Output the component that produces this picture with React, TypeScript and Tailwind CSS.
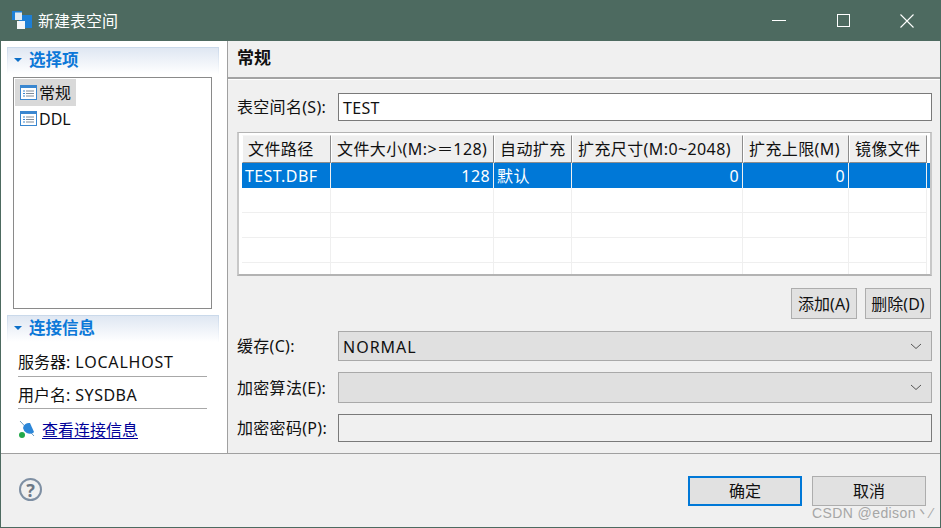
const font = "font-['Noto_Sans','Noto_Sans_CJK_SC',sans-serif]";

const columns = [
  { title: "文件路径", width: "w-[89px]", value: "TEST.DBF", right: false },
  { title: "文件大小(M:>＝128)", width: "w-[163px]", value: "128", right: true },
  { title: "自动扩充", width: "w-[78px]", value: "默认", right: false },
  { title: "扩充尺寸(M:0~2048)", width: "w-[171px]", value: "0", right: true },
  { title: "扩充上限(M)", width: "w-[106px]", value: "0", right: true },
  { title: "镜像文件", width: "w-[78px]", value: "", right: false },
];

const ListIcon = () => (
  <svg width="18" height="16" viewBox="0 0 18 16" className="shrink-0">
    <rect x="0.5" y="0.5" width="16" height="14" fill="#fff" stroke="#3a87d0" />
    <rect x="0" y="0" width="17" height="3" fill="#3a87d0" />
    <path d="M3 6h2M3 8.5h2M3 11h2" stroke="#3a87d0" strokeWidth="1.2" />
    <path d="M6 6h8M6 8.5h8M6 11h8" stroke="#7f8c99" strokeWidth="1.2" />
  </svg>
);

const Chevron = () => (
  <svg width="12" height="7" viewBox="0 0 12 7" className="shrink-0">
    <path d="M1 1l5 4.5L11 1" fill="none" stroke="#555" strokeWidth="1" />
  </svg>
);

const SectionHeader = ({ title }: { title: string }) => (
  <div className="flex h-[27px] items-center gap-[7px] rounded-t-[4px] border-x border-t border-[#c9d8ea] bg-gradient-to-b from-[#dfe7f2] to-white pb-[2px] pl-[6px] [border-image:linear-gradient(#c9d8ea,#fff)_1]">
    <div className="h-0 w-0 border-x-[4px] border-t-[4px] border-x-transparent border-t-[#0c6fc8]" />
    <span className="text-[16.5px] font-semibold text-[#0c78d8]">{title}</span>
  </div>
);

const Combo = ({ value, height }: { value: string; height: string }) => (
  <div className={`flex flex-1 items-center justify-between border border-[#a9a9a9] bg-[#e0e0e0] pl-1 pr-[9px] text-[16px] tracking-[1px] text-[#111] ${height}`}>
    <span className="pt-px">{value}</span>
    <Chevron />
  </div>
);

export default function App() {
  return (
    <div className={`flex h-[528px] w-[941px] flex-col overflow-hidden border-x border-b border-[#4d6a60] bg-[#f0f0f0] text-[16px] text-[#111] ${font}`}>
      {/* title bar */}
      <div className="-mx-px flex h-[41px] shrink-0 items-center bg-[#4d6a60] pl-3 pr-[2px] text-white">
        <svg width="20" height="20" viewBox="0 0 20 20" className="shrink-0">
          <rect x="7" y="4" width="13" height="13" fill="#1d7fd6" />
          <rect x="0" y="0" width="10" height="9" fill="#1d7fd6" />
          <rect x="3" y="1.5" width="7" height="7.5" fill="#dfe9f2" />
          <rect x="5" y="10" width="8" height="8" fill="#f3f6f8" />
        </svg>
        <span className="ml-[6px] text-[16px]">新建表空间</span>
        <div className="ml-auto flex items-center">
          <div className="flex h-[41px] w-[64px] items-center justify-center">
            <div className="h-px w-[14px] bg-white" />
          </div>
          <div className="flex h-[41px] w-[64px] items-center justify-center">
            <div className="h-[13px] w-[13px] border border-white" />
          </div>
          <div className="flex h-[41px] w-[64px] items-center justify-center">
            <svg width="14" height="14" viewBox="0 0 14 14">
              <path d="M0.5 0.5l13 13M13.5 0.5l-13 13" stroke="#fff" strokeWidth="1.1" />
            </svg>
          </div>
        </div>
      </div>

      {/* body */}
      <div className="flex min-h-0 flex-1">
        <div className="flex w-[227px] shrink-0 flex-col border-r border-[#a0a0a0] bg-white px-[6px] pt-[6px]">
          <div className="w-[212px]">
            <SectionHeader title="选择项" />
          </div>
          <div className="ml-[6px] mt-[3px] h-[232px] w-[199px] border border-[#8a8a8a] p-px">
            <div className="flex h-[27px] w-[61px] items-center gap-px bg-[#d9d9d9] pl-[5px]">
              <ListIcon />
              <span>常规</span>
            </div>
            <div className="flex h-[25px] w-[61px] items-center gap-px pl-[5px]">
              <ListIcon />
              <span>DDL</span>
            </div>
          </div>
          <div className="mt-[6px] w-[212px]">
            <SectionHeader title="连接信息" />
          </div>
          <div className="ml-[11px] w-[189px]">
            <div className="flex h-[35px] items-center border-b border-[#a8a8a8] pt-[5px]">
              服务器: <span className="ml-[5px] tracking-[0.8px]">LOCALHOST</span>
            </div>
            <div className="flex h-[32px] items-center border-b border-[#a8a8a8] pt-[4px]">
              用户名: <span className="ml-[5px] tracking-[0.5px]">SYSDBA</span>
            </div>
            <div className="flex h-[39px] items-center gap-[4px] pt-[2px]">
              <svg width="20" height="20" viewBox="0 0 20 20" className="shrink-0">
                <path d="M2 1l14 15" stroke="#6a9cc4" strokeWidth="1" />
                <path d="M5 8a6 6 0 0 1 7-5l4 9-1 1a7 7 0 0 1-10-5z" fill="#2b86d8" />
                <circle cx="4" cy="15" r="3" fill="#22a84a" />
              </svg>
              <a className="text-[#000099] underline underline-offset-2">查看连接信息</a>
            </div>
          </div>
        </div>

        <div className="flex min-w-0 flex-1 flex-col">
          <div className="flex h-[38px] shrink-0 items-center border-b-2 border-[#a3a3a3] pb-[2px] pl-[9px] text-[17px] font-bold">常规</div>
          <div className="border-t border-white" />
          <div className="flex flex-1 flex-col pl-[9px] pr-[8px]">
            <div className="mt-[13px] flex items-center">
              <label className="w-[101px] shrink-0 whitespace-nowrap tracking-[0.3px]">表空间名(S):</label>
              <div className="flex h-[28px] flex-1 items-center border border-[#7a7a7a] bg-white pl-1 pt-px text-[16px] tracking-[0.3px]">TEST</div>
            </div>

            <div className="mt-[11px] h-[144px] overflow-hidden border-2 border-t border-[#b3b3b3] border-x-[#c8c8c8] bg-white pl-[3px] pt-[2px]">
              <div className="flex h-[28px] bg-white">
                {columns.map((c) => (
                  <div key={c.title} className={`${c.width} flex h-[28px] items-center whitespace-nowrap border-y border-x border-y-[#f5f5f5] border-b-[#8c8c8c] border-l-[#fff] border-r-[#8c8c8c] bg-[#efefef] pl-[5px] tracking-[0.4px]`}>
                    {c.title}
                  </div>
                ))}
              </div>
              <div className="flex h-[25px] bg-[#0078d7] text-white">
                {columns.map((c) => (
                  <div key={c.title} className={`${c.width} flex items-center border-r border-[#f0f0f0] pl-[3px] pr-[3px] ${c.right ? "justify-end" : ""}`}>
                    <span className="tracking-[0.4px]">{c.value}</span>
                  </div>
                ))}
              </div>
              {[0, 1, 2, 3].map((row) => (
                <div key={row} className="flex h-[25px]">
                  {columns.map((c) => (
                    <div key={c.title} className={`${c.width} border-b border-r border-[#efefef]`} />
                  ))}
                </div>
              ))}
            </div>

            <div className="mt-[12px] flex justify-end gap-[8px] pr-[1px]">
              <button className="h-[31px] w-[66px] whitespace-nowrap border border-[#adadad] bg-[#e1e1e1]">添加(A)</button>
              <button className="h-[31px] w-[66px] whitespace-nowrap border border-[#adadad] bg-[#e1e1e1]">删除(D)</button>
            </div>

            <div className="mt-[12px] flex items-center">
              <label className="w-[101px] shrink-0 tracking-[0.3px]">缓存(C):</label>
              <Combo value="NORMAL" height="h-[30px]" />
            </div>
            <div className="mt-[11px] flex items-center">
              <label className="w-[101px] shrink-0 whitespace-nowrap tracking-[0.3px]">加密算法(E):</label>
              <Combo value="" height="h-[31px]" />
            </div>
            <div className="mt-[11px] flex items-center">
              <label className="w-[101px] shrink-0 whitespace-nowrap tracking-[0.3px]">加密密码(P):</label>
              <div className="h-[28px] flex-1 border border-[#7a7a7a] bg-[#f0f0f0]" />
            </div>
          </div>
        </div>
      </div>

      {/* footer */}
      <div className="relative flex h-[74px] shrink-0 items-start border-t border-[#a0a0a0] pl-[18px] pr-[14px] pt-[22px]">
        <div className="mt-[2px] flex h-[23px] w-[23px] items-center justify-center rounded-full border-2 border-[#7e8fa3] text-[18px] font-bold leading-none text-[#6c7886]">?</div>
        <button className="ml-auto h-[30px] w-[114px] border-2 border-[#0078d7] bg-[#e1e1e1]">确定</button>
        <button className="ml-[10px] h-[30px] w-[114px] border border-[#adadad] bg-[#e1e1e1]">取消</button>
        <span className="absolute bottom-[3px] right-[7px] font-['Liberation_Sans',sans-serif] text-[14px] tracking-[0.4px] text-[#a6a6a6]">CSDN @edison丶⁄</span>
      </div>
    </div>
  );
}
